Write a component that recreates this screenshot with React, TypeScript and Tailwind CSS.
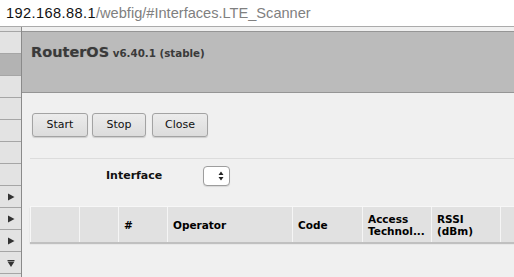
const sideRows = [
  { h: "h-[5px]", bg: "bg-[#e3e3e3]", icon: "" },
  { h: "h-[22px]", bg: "bg-[#e3e3e3]", icon: "" },
  { h: "h-[22px]", bg: "bg-[#b3b3b3]", icon: "" },
  { h: "h-[22px]", bg: "bg-[#e3e3e3]", icon: "" },
  { h: "h-[22px]", bg: "bg-[#e3e3e3]", icon: "" },
  { h: "h-[22px]", bg: "bg-[#e3e3e3]", icon: "" },
  { h: "h-[22px]", bg: "bg-[#e3e3e3]", icon: "" },
  { h: "h-[22px]", bg: "bg-[#e3e3e3]", icon: "" },
  { h: "h-[22px]", bg: "bg-[#e3e3e3]", icon: "right" },
  { h: "h-[22px]", bg: "bg-[#e3e3e3]", icon: "right" },
  { h: "h-[22px]", bg: "bg-[#e3e3e3]", icon: "right" },
  { h: "h-[22px]", bg: "bg-[#e3e3e3]", icon: "down" },
  { h: "h-[22px]", bg: "bg-[#e3e3e3]", icon: "" },
];

const columns = [
  { w: "w-[49px]", label: "" },
  { w: "w-[39px]", label: "" },
  { w: "w-[49px]", label: "#" },
  { w: "w-[125px]", label: "Operator" },
  { w: "w-[70px]", label: "Code" },
  { w: "w-[69px]", label: "Access\nTechnol..." },
  { w: "w-[69px]", label: "RSSI\n(dBm)" },
  { w: "w-[40px]", label: "" },
];

function Arrow({ dir }: { dir: string }) {
  if (dir === "right") {
    return (
      <svg width="8" height="8" viewBox="0 0 8 8">
        <path d="M1 0.5 L7.5 4 L1 7.5 Z" fill="#333" />
      </svg>
    );
  }
  return (
    <svg width="8" height="8" viewBox="0 0 8 8">
      <path d="M0.5 1 L7.5 1 L7.5 2 L0.5 2 Z M0.5 2.5 L7.5 2.5 L4 8 Z" fill="#333" />
    </svg>
  );
}

function Button({ label, className }: { label: string; className: string }) {
  return (
    <button
      type="button"
      className={`h-[24px] rounded-[3px] border border-[#a3a3a3] bg-gradient-to-b from-[#ececec] to-[#dcdcdc] text-[11px] text-[#111] shadow-[0_1px_1px_rgba(0,0,0,0.15)] ${className}`}
    >
      {label}
    </button>
  );
}

export default function App() {
  return (
    <div className="flex h-[277px] w-[514px] flex-col overflow-hidden bg-[#f0f0f0] font-['DejaVu_Sans',sans-serif]">
      <div className="flex h-[27px] shrink-0 items-center border-b border-[#ababab] bg-white pl-[6px] font-['Liberation_Sans',Arial,sans-serif] text-[14.6px] leading-none">
        <span className="tracking-[0.4px] text-[#111]">192.168.88.1</span>
        <span className="text-[#808080]">/webfig/#Interfaces.LTE_Scanner</span>
      </div>

      <div className="flex min-h-0 flex-1">
        <div className="w-[22px] shrink-0 border-r border-[#8a8a8a]">
          {sideRows.map((r, i) => (
            <div
              key={i}
              className={`flex items-center justify-center border-b border-[#a6a6a6] ${r.h} ${r.bg}`}
            >
              {r.icon && <Arrow dir={r.icon} />}
            </div>
          ))}
        </div>

        <div className="flex min-w-0 flex-1 flex-col">
          <div className="h-[4px] shrink-0" />
          <div className="h-[62px] shrink-0 border-y border-[#959595] bg-[#bbbbbb] pl-[9px] pt-[8px]">
            <span className="text-[14.5px] font-bold text-[#3a3a3a] [text-shadow:0_0_1px_rgba(0,0,0,0.25)]">
              RouterOS
            </span>
            <span className="text-[10.3px] font-bold text-[#3a3a3a]"> v6.40.1 (stable)</span>
          </div>

          <div className="mt-[20px] flex pl-[10px]">
            <Button label="Start" className="w-[56px]" />
            <Button label="Stop" className="ml-[4px] w-[54px]" />
            <Button label="Close" className="ml-[6px] w-[56px]" />
          </div>

          <div className="ml-[8px] mt-[21px] border-t border-[#dcdcdc]" />

          <div className="mt-[7px] flex items-center">
            <span className="ml-[84px] w-[57px] text-[11px] font-bold text-[#111]">Interface</span>
            <div className="ml-[40px] flex h-[20px] w-[27px] items-center justify-end rounded-[4px] border border-[#9d9d9d] bg-white pr-[5px] shadow-[0_1px_1px_rgba(0,0,0,0.1)]">
              <svg width="6" height="10" viewBox="0 0 6 10">
                <path d="M3 0.5 L5.5 4 L0.5 4 Z M0.5 6 L5.5 6 L3 9.5 Z" fill="#222" />
              </svg>
            </div>
          </div>

          <div className="ml-[8px] mt-[20px] flex h-[36px] border-l border-t border-[#f7f7f7] shadow-[0_2px_1px_rgba(0,0,0,0.2)]">
            {columns.map((c, i) => (
              <div
                key={i}
                className={`flex shrink-0 items-center whitespace-pre border-r border-[#f5f5f5] bg-[#e1e1e1] pl-[5px] text-[10.5px] font-bold leading-[12px] text-black ${c.w}`}
              >
                {c.label}
              </div>
            ))}
          </div>
        </div>
      </div>
    </div>
  );
}
